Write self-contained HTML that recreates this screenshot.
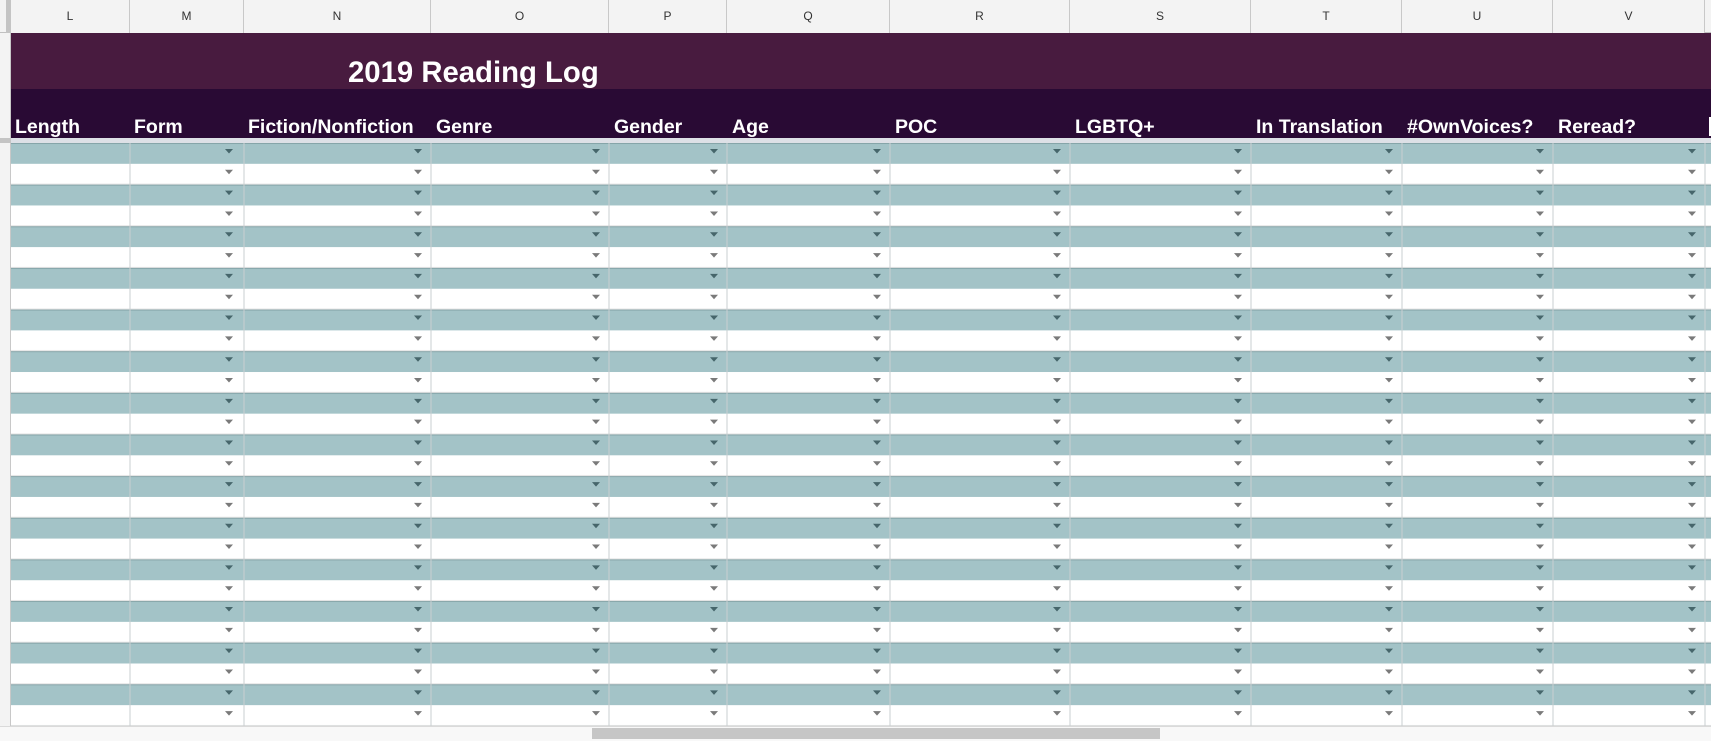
<!DOCTYPE html>
<html><head><meta charset="utf-8"><style>
body{margin:0;width:1711px;height:741px;overflow:hidden;background:#fff;font-family:"Liberation Sans",Arial,sans-serif;position:relative}
.a{position:absolute}
.colh{position:absolute;top:0;height:33px;line-height:33px;text-align:center;font-size:12px;color:#333;border-right:1px solid #c8c8c8;box-sizing:border-box;background:#f3f3f3}
.hd{position:absolute;top:116px;font-size:19.5px;font-weight:bold;color:#fff;white-space:nowrap}
</style></head><body>
<div class="a" style="left:0;top:0;width:1711px;height:33px;background:#f3f3f3;border-bottom:1px solid #c0c0c0;box-sizing:border-box"></div>
<div class="a" style="left:6px;top:0;width:5px;height:33px;background:#c4c4c4"></div>
<div class="colh" style="left:11px;width:119px">L</div>
<div class="colh" style="left:130px;width:114px">M</div>
<div class="colh" style="left:244px;width:187px">N</div>
<div class="colh" style="left:431px;width:178px">O</div>
<div class="colh" style="left:609px;width:118px">P</div>
<div class="colh" style="left:727px;width:163px">Q</div>
<div class="colh" style="left:890px;width:180px">R</div>
<div class="colh" style="left:1070px;width:181px">S</div>
<div class="colh" style="left:1251px;width:151px">T</div>
<div class="colh" style="left:1402px;width:151px">U</div>
<div class="colh" style="left:1553px;width:152px">V</div>
<div class="a" style="left:0;top:33px;width:11px;height:693px;background:#f3f3f3;border-right:1px solid #c8c8c8;box-sizing:border-box"></div>
<div class="a" style="left:0;top:138px;width:11px;height:5px;background:#c4c4c4"></div>
<div class="a" style="left:11px;top:33px;width:1700px;height:56px;background:#481b3f"></div>
<div class="a" style="left:11px;top:89px;width:1700px;height:49px;background:#290a34"></div>
<div class="a" style="left:11px;top:138px;width:1700px;height:5px;background:#dde0e6"></div>
<div class="a" style="left:348px;top:56px;font-size:29.3px;font-weight:bold;color:#fff;white-space:nowrap">2019 Reading Log</div>
<div class="hd" style="left:15px">Length</div>
<div class="hd" style="left:134px">Form</div>
<div class="hd" style="left:248px">Fiction/Nonfiction</div>
<div class="hd" style="left:436px">Genre</div>
<div class="hd" style="left:614px">Gender</div>
<div class="hd" style="left:732px">Age</div>
<div class="hd" style="left:895px">POC</div>
<div class="hd" style="left:1075px">LGBTQ+</div>
<div class="hd" style="left:1256px">In Translation</div>
<div class="hd" style="left:1407px">#OwnVoices?</div>
<div class="hd" style="left:1558px">Reread?</div>
<div class="a" style="left:1709px;top:117px;width:2px;height:19px;background:#fff"></div>
<svg class="a" style="left:0;top:143px" width="1711" height="583" viewBox="0 0 1711 583">
<defs>
<pattern id="st" width="1711" height="41.64" patternUnits="userSpaceOnUse">
<rect width="1711" height="20.82" fill="#a3c3c7"/>
<rect width="1711" height="1" fill="#86a5a9"/>
<rect y="20.82" width="1711" height="20.82" fill="#fff"/>
<rect y="40.64" width="1711" height="1" fill="#e2e2e2"/>
</pattern>
<g id="col">
<path d="M0 6 L8 6 L4 10.5 Z M0 47.64 L8 47.64 L4 52.14 Z M0 89.28 L8 89.28 L4 93.78 Z M0 130.92 L8 130.92 L4 135.42 Z M0 172.56 L8 172.56 L4 177.06 Z M0 214.2 L8 214.2 L4 218.7 Z M0 255.84 L8 255.84 L4 260.34 Z M0 297.48 L8 297.48 L4 301.98 Z M0 339.12 L8 339.12 L4 343.62 Z M0 380.76 L8 380.76 L4 385.26 Z M0 422.4 L8 422.4 L4 426.9 Z M0 464.04 L8 464.04 L4 468.54 Z M0 505.68 L8 505.68 L4 510.18 Z M0 547.32 L8 547.32 L4 551.82 Z" fill="#46666b"/>
<path d="M0 26.8 L8 26.8 L4 31.3 Z M0 68.44 L8 68.44 L4 72.94 Z M0 110.08 L8 110.08 L4 114.58 Z M0 151.72 L8 151.72 L4 156.22 Z M0 193.36 L8 193.36 L4 197.86 Z M0 235 L8 235 L4 239.5 Z M0 276.64 L8 276.64 L4 281.14 Z M0 318.28 L8 318.28 L4 322.78 Z M0 359.92 L8 359.92 L4 364.42 Z M0 401.56 L8 401.56 L4 406.06 Z M0 443.2 L8 443.2 L4 447.7 Z M0 484.84 L8 484.84 L4 489.34 Z M0 526.48 L8 526.48 L4 530.98 Z M0 568.12 L8 568.12 L4 572.62 Z" fill="#7a7a7a"/>
</g>
</defs>
<rect x="11" width="1700" height="583" fill="url(#st)"/>
<g fill="#c9cfd1">
<rect x="129.5" width="1" height="583"/><rect x="243.5" width="1" height="583"/><rect x="430.5" width="1" height="583"/><rect x="608.5" width="1" height="583"/><rect x="726.5" width="1" height="583"/><rect x="889.5" width="1" height="583"/><rect x="1069.5" width="1" height="583"/><rect x="1250.5" width="1" height="583"/><rect x="1401.5" width="1" height="583"/><rect x="1552.5" width="1" height="583"/><rect x="1704.5" width="1" height="583"/>
</g>
<use href="#col" x="225"/><use href="#col" x="414"/><use href="#col" x="592"/><use href="#col" x="710"/><use href="#col" x="873"/><use href="#col" x="1053"/><use href="#col" x="1234"/><use href="#col" x="1385"/><use href="#col" x="1536"/><use href="#col" x="1688"/>
</svg>
<div class="a" style="left:0;top:726px;width:1711px;height:15px;background:#f8f8f8;border-top:1px solid #dadada;box-sizing:border-box"></div>
<div class="a" style="left:592px;top:728px;width:568px;height:11px;background:#c6c6c6"></div>
</body></html>
